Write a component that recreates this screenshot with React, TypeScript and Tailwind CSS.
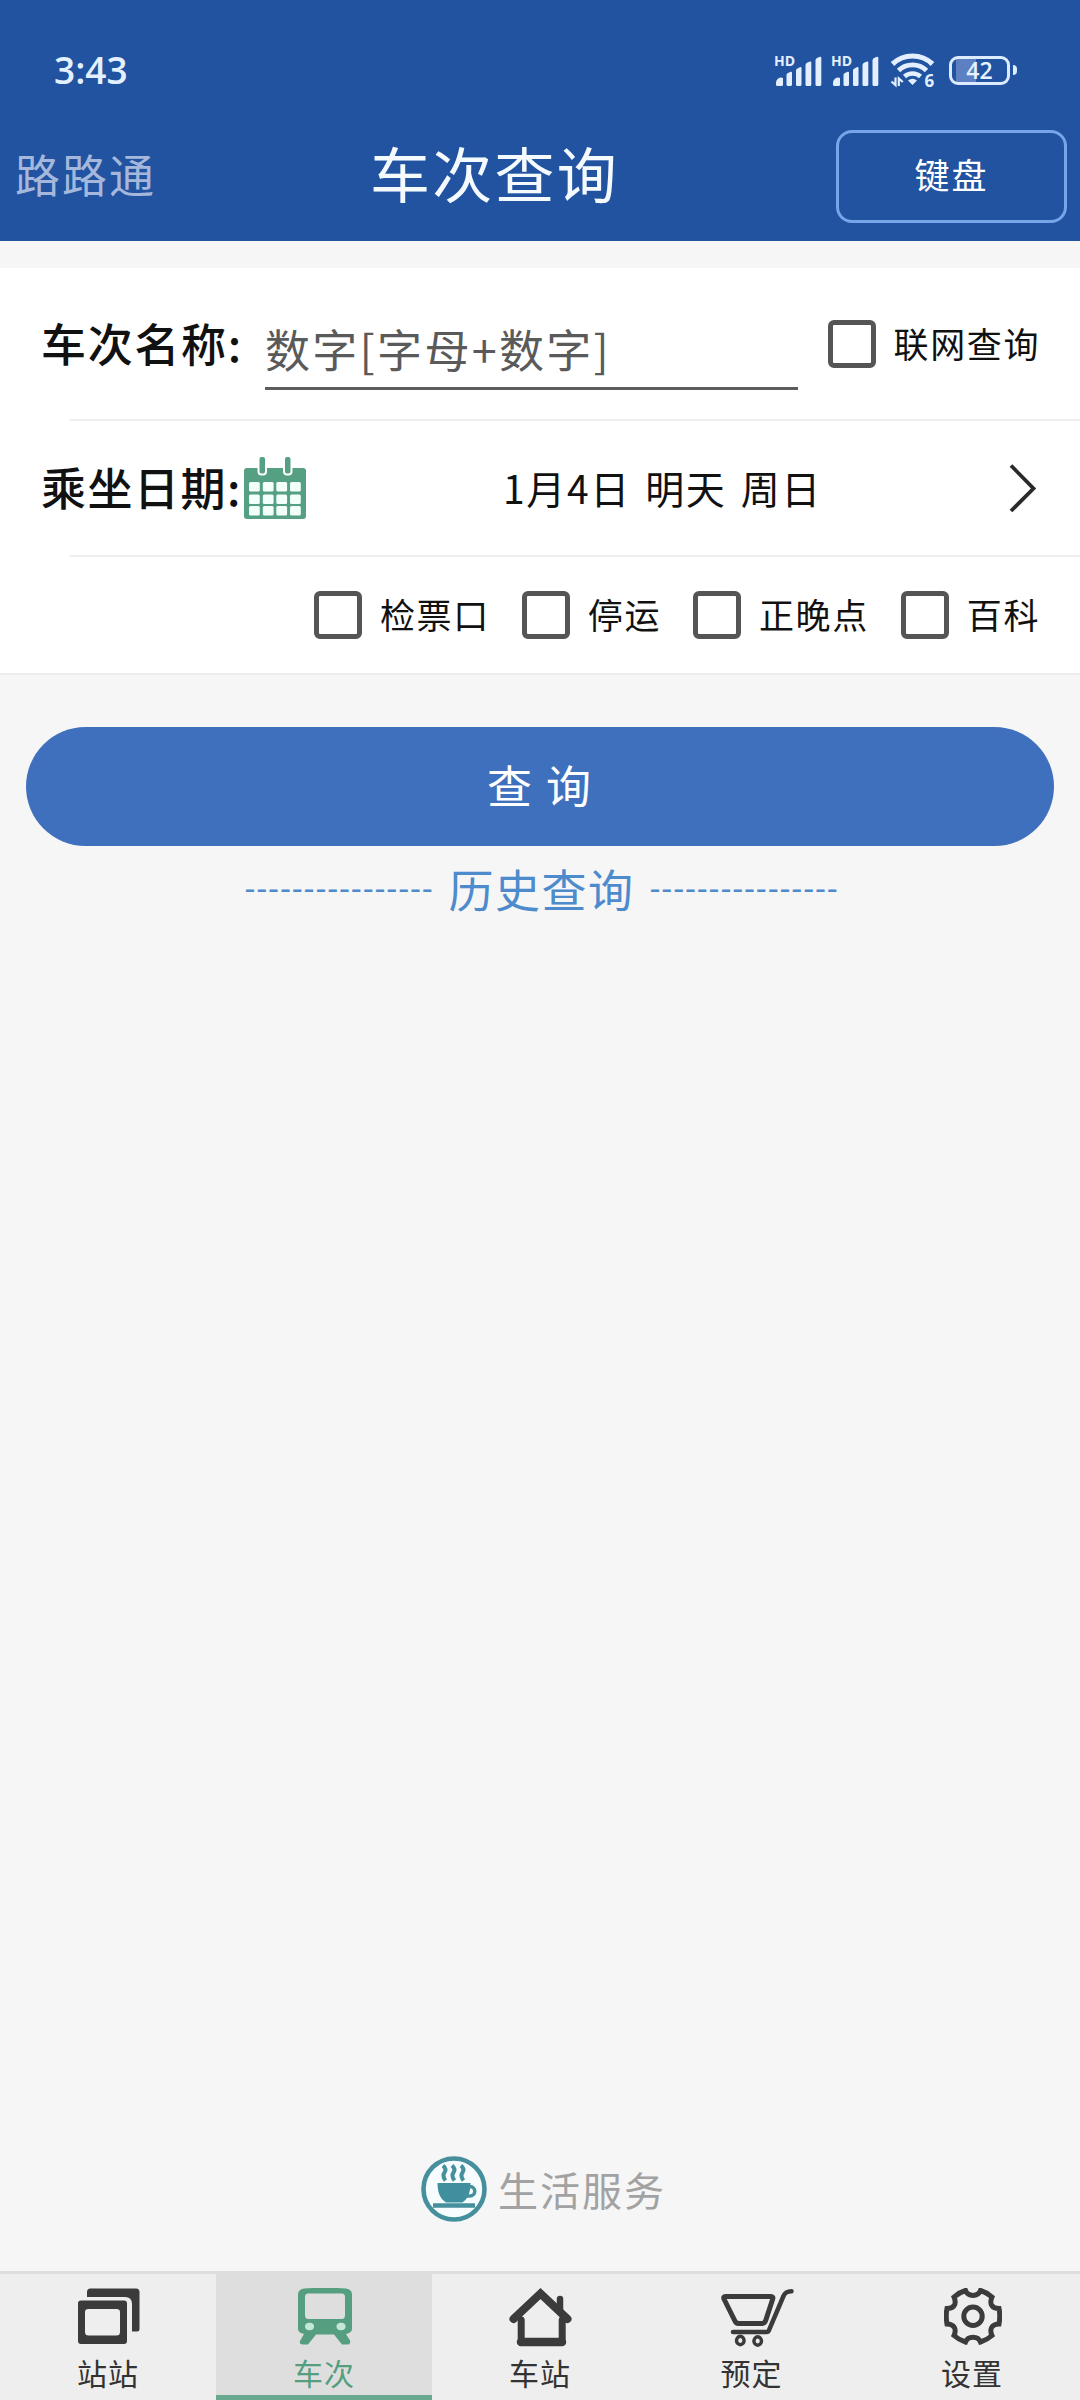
import React, { useState } from 'react';

type TabId = 'route' | 'train' | 'station' | 'booking' | 'settings';

const SignalIcon = () => (
  <svg viewBox="0 -4 50 38" className="-mt-1 h-[38px] w-[50px] shrink-0" fill="#e3efff">
    <text x="0" y="13" fontSize="14" fontWeight="700" fontFamily="'Open Sans', sans-serif">HD</text>
    <path d="M2 29.500a5 5 0 0 1 7-4.500v6.500a1.500 1.500 0 0 1-1.500 1.500H3.500A1.500 1.500 0 0 1 2 31.500z" />
    <path d="M12.500 22q0-1.500 1.500-2l2.500-1.200q1.500-.3 1.500 1v11.700q0 1.500-1.500 1.500H14q-1.500 0-1.500-1.500z" />
    <path d="M22 17.500q0-1.500 1.500-2l2.700-1.500q1.300-.3 1.300 1v16.500q0 1.500-1.500 1.500h-2.500q-1.500 0-1.500-1.500z" />
    <path d="M31.500 12q0-1.500 1.500-2.200l3-1.300q1.300-.3 1.300 1v22q0 1.500-1.500 1.500H33q-1.500 0-1.500-1.500z" />
    <path d="M41.500 7.500q0-1.700 1.500-2.500l3-1.200q1.300-.3 1.300 1.200v26.500q0 1.500-1.500 1.500H43q-1.500 0-1.500-1.500z" />
  </svg>
);

const WifiIcon = () => (
  <svg viewBox="0 0 48 44" className="-mb-1.5 h-11 w-12 shrink-0" fill="none" stroke="#e3efff">
    <path d="M2.500 13a29 29 0 0 1 40 0" strokeWidth="5.200" />
    <path d="M8.500 19.500a20 20 0 0 1 28 0" strokeWidth="4.800" />
    <path d="M14.500 25.500a12 12 0 0 1 16 0" strokeWidth="4.600" />
    <path d="M18 29.500q4.500-3.500 9 0l-4.500 4.500z" fill="#e3efff" stroke="none" />
    <path d="M1.500 30.500l4 3.500V26.500M8.800 35V27.500l4 3.500" strokeWidth="2.200" />
    <text x="34.500" y="35.500" fontSize="17" fontWeight="700" fontFamily="'Open Sans', sans-serif" fill="#e3efff" stroke="none">6</text>
  </svg>
);

const BatteryIcon = () => (
  <div className="flex items-center gap-[3px]">
    <div className="flex h-[29px] w-[61px] items-center justify-center rounded-[9px] border-[3px] border-[#dcebff] bg-[linear-gradient(90deg,transparent_4px,#5c80c2_4px,#5c80c2_24px,transparent_24px)] font-['Open_Sans',sans-serif] text-[23px] font-semibold leading-none text-[#e6f2ff]">
      42
    </div>
    <div className="h-[10px] w-[4px] rounded-r-sm bg-[#dcebff]" />
  </div>
);

const CalendarIcon = () => (
  <svg viewBox="0 0 62 62" className="h-[62px] w-[62px] shrink-0">
    <rect x="0" y="11" width="62" height="51" rx="3" fill="#559f82" />
    <g fill="#559f82" stroke="#fff" strokeWidth="2">
      <rect x="14.500" y="-1" width="7.500" height="18.500" rx="3" />
      <rect x="40" y="-1" width="7.500" height="18.500" rx="3" />
    </g>
    <g fill="#f2fffa">
      {[25, 37.5, 49].map((y) =>
        [5, 18.8, 32.3, 46].map((x) => <rect key={`${x}-${y}`} x={x} y={y} width="10.800" height="9.500" rx="1.500" />)
      )}
    </g>
  </svg>
);

const CoffeeIcon = () => (
  <svg viewBox="0 0 66 66" className="h-[66px] w-[66px] shrink-0" fill="none" stroke="#468f9c">
    <circle cx="33" cy="33" r="30.500" strokeWidth="4.600" fill="#f7fdfe" />
    <path d="M22 9.500q4 3.500 1.500 7t1 8M31 9.500q4 3.500 1.500 7t1 8M40 9.500q4 3.500 1.500 7t1 8" strokeWidth="4" />
    <path d="M16.500 27h33c0 10-3 16-8 19.500H25c-5.500-3.500-8.500-9.500-8.500-19.500z" fill="#3f8f9e" stroke="none" />
    <path d="M47 30.500h2a4.500 4.500 0 0 1 0 9.500H45" strokeWidth="3.500" />
    <path d="M12 49.500h42" strokeWidth="4.500" />
  </svg>
);

const RouteIcon = () => (
  <svg viewBox="0 0 62 58" className="h-[58px] w-[62px]" fill="#3b3b3b">
    <path d="M9 9V4q0-3.500 3.500-3.500H58q3.500 0 3.500 3.500v37q0 2.500-2.500 2.500h-5V16q0-7-7-7z" />
    <path fillRule="evenodd" d="M3 12.500h43q3 0 3 3V53q0 3-3 3H3q-3 0-3-3V15.500q0-3 3-3zM10.500 21Q7 21 7 24v20q0 3.500 3.500 3.500h28q3.500 0 3.500-3.500V24q0-3-3.500-3z" />
  </svg>
);

const TrainIcon = () => (
  <svg viewBox="0 0 54 58" className="h-[58px] w-[54px]" fill="#559f80">
    <path fillRule="evenodd" d="M6 .5Q27-1 48 .5q6 1 6 6V41q0 3.500-6 5l4 6.500q1 4-3 4h-5L36 46.500H18L10 56.500H5q-4 0-3-3.500l4-7q-6-1.500-6-5V6.500q0-5 6-6zM10 5.500Q7 5.500 7 9v18q0 4 3 4h34q3 0 3-4V9q0-3.500-3-3.500z" />
    <ellipse cx="11.500" cy="38.500" rx="4.500" ry="3.700" fill="#c4e8d8" />
    <ellipse cx="43" cy="38.500" rx="4.500" ry="3.700" fill="#c4e8d8" />
  </svg>
);

const StationIcon = () => (
  <svg viewBox="0 0 64 59" className="h-[59px] w-[64px]" fill="none" stroke="#3b3b3b" strokeLinejoin="round" strokeLinecap="round">
    <path d="M12.200 32v22h41V32" strokeWidth="7" />
    <path d="M12 54h41" strokeWidth="8.500" />
    <path d="M4.500 31L31.500 5.500 58.500 31" strokeWidth="8" strokeLinejoin="miter" />
    <path d="M51 11v11" strokeWidth="6.500" />
  </svg>
);

const CartIcon = () => (
  <svg viewBox="0 0 74 60" className="h-[60px] w-[74px]" fill="none" stroke="#3b3b3b" strokeLinejoin="round" strokeLinecap="round">
    <path d="M4.500 8.500h45.500q2.500 0 1.700 2.500l-7 21.500q-1 3-4 3H17.500q-2.500 0-3.800-3L3 11q-1-2.500 1.500-2.500z" strokeWidth="5" />
    <path d="M12 44h33.500q1.800 0 2.500-1.800L62.500 8q2-4.700 8-4.700" strokeWidth="4.500" />
    <ellipse cx="19.300" cy="52.500" rx="3.800" ry="4.200" strokeWidth="3.400" />
    <ellipse cx="36.700" cy="53" rx="3.800" ry="4.200" strokeWidth="3.400" />
  </svg>
);

const GearIcon = () => (
  <svg viewBox="0 0 58 58" className="h-[58px] w-[58px]" fill="none" stroke="#3b3b3b" strokeWidth="5">
    <path d="M21.500 2.500C24 9 34 9 36.500 2.500Q43 4.500 48 9C45 16 48 20.500 55 20.500Q56.500 28 55 36C48 36 45 41 48 47.500Q43 52 36.500 54C34 47.500 24 47.500 21.500 54Q15 52 10 47.500C13 41 10 36 3 36Q1.500 28 3 20.500C10 20.500 13 16 10 9Q15 4.500 21.500 2.500z" />
    <circle cx="29" cy="28.200" r="9.200" />
  </svg>
);

interface CheckFieldProps {
  label: string;
}

const CheckField: React.FC<CheckFieldProps> = ({ label }) => {
  const [checked, setChecked] = useState(false);

  return (
    <button onClick={() => setChecked(!checked)} className="flex shrink-0 items-center gap-[18px] whitespace-nowrap">
      <span className={`h-12 w-12 shrink-0 rounded-md border-[5px] border-[#555] ${checked ? 'bg-[#559f82]' : 'bg-white'}`} />
      <span className="-mr-[2px] pb-[3px] text-[35px] leading-none tracking-[1.6px] text-[#111]">{label}</span>
    </button>
  );
};

const tabs = [
  { id: 'route' as TabId, label: '站站', icon: RouteIcon },
  { id: 'train' as TabId, label: '车次', icon: TrainIcon },
  { id: 'station' as TabId, label: '车站', icon: StationIcon },
  { id: 'booking' as TabId, label: '预定', icon: CartIcon },
  { id: 'settings' as TabId, label: '设置', icon: GearIcon },
];

const options = ['检票口', '停运', '正晚点', '百科'];

export default function App() {
  const [currentTab, setCurrentTab] = useState<TabId>('train');

  return (
    <div className="flex h-[2400px] w-[1080px] flex-col overflow-hidden bg-[#f6f6f6] font-['Noto_Sans_CJK_SC',sans-serif]">
      {/* Header */}
      <header className="h-[241px] shrink-0 bg-[#2153a1]">
        <div className="flex h-[116px] items-center justify-between pl-[54px] pr-[63px] pt-[24px]">
          <span className="pb-[2px] font-['Open_Sans',sans-serif] text-[37px] font-semibold leading-none text-[#e3f0ff]">3:43</span>
          <div className="flex items-center">
            <SignalIcon />
            <div className="w-[7px]" />
            <SignalIcon />
            <div className="w-[9px]" />
            <WifiIcon />
            <div className="w-[11px]" />
            <BatteryIcon />
          </div>
        </div>
        <div className="flex h-[120px] items-center justify-between pl-[15px] pr-[13px]">
          <span className="pb-[5px] text-[45px] leading-none tracking-[2px] text-[#a5b8dc]">路路通</span>
          <h1 className="pb-[8px] pr-[3px] text-[60px] leading-none tracking-[2.300px] text-[#f5faff]">车次查询</h1>
          <button className="flex h-[93px] w-[231px] items-center justify-center rounded-2xl border-[3px] border-[#78a4ea] pb-[5px] text-[35px] leading-none tracking-[2px] text-white">
            键盘
          </button>
        </div>
      </header>

      {/* Query form */}
      <section className="mt-[27px] shrink-0 bg-white">
        <div className="flex h-[151px] items-center pl-[41px] pr-[42px]">
          <span className="w-[224px] shrink-0 whitespace-nowrap pb-[3px] text-[45px] font-medium leading-none tracking-[1.700px] text-[#111]">车次名称:</span>
          <div className="mt-[15px] flex h-[77px] w-[533px] items-center border-b-[3px] border-[#5c5c5c] pb-[2px]">
            <span className="whitespace-nowrap text-[45px] leading-none tracking-[2.300px] text-[#5a5a5a]">数字[字母+数字]</span>
          </div>
          <div className="ml-auto">
            <CheckField label="联网查询" />
          </div>
        </div>
        <div className="ml-[70px] h-[2px] bg-[#efefef]" />
        <div className="flex h-[134px] items-center pl-[41px] pr-[43px]">
          <span className="w-[203px] shrink-0 whitespace-nowrap pb-[3px] text-[45px] font-medium leading-none tracking-[1.500px] text-[#111]">乘坐日期:</span>
          <CalendarIcon />
          <span className="flex-1 pb-[2px] pl-[10px] text-center text-[39px] leading-none tracking-[1.600px] text-[#111] [word-spacing:4px]">1月4日 明天 周日</span>
          <svg viewBox="0 0 28 50" className="h-[50px] w-7" fill="none" stroke="#2a2a2a" strokeWidth="3.800">
            <path d="M2 2.500L24.500 25.500 2 48" />
          </svg>
        </div>
        <div className="ml-[70px] h-[2px] bg-[#efefef]" />
        <div className="flex h-[118px] items-center justify-end gap-[34px] border-b-2 border-[#ececec] pr-[42px]">
          {options.map((option) => (
            <CheckField key={option} label={option} />
          ))}
        </div>
      </section>

      <main className="flex flex-1 flex-col items-center">
        <button className="mt-[52px] flex h-[119px] w-[1028px] items-center justify-center rounded-full bg-[#3f70bd] pb-[4px] text-[45px] leading-none tracking-[2px] text-white">
          查 询
        </button>
        <div className="mt-[20px] flex items-center justify-center whitespace-nowrap leading-none text-[#4d8bcd]">
          <span className="w-[186px] font-['Liberation_Sans',sans-serif] text-[33px] leading-none tracking-[0.83px]">----------------</span>
          <h2 className="pl-[18px] pr-[15px] text-[45px] leading-none tracking-[1.500px]">历史查询</h2>
          <span className="w-[186px] font-['Liberation_Sans',sans-serif] text-[33px] leading-none tracking-[0.83px]">----------------</span>
        </div>
        <div className="mb-[49px] mt-auto flex items-center gap-[11px] pl-[7px]">
          <CoffeeIcon />
          <span className="text-[40px] leading-none tracking-[2px] text-[#a2a2a2]">生活服务</span>
        </div>
      </main>

      {/* Bottom navigation */}
      <nav className="grid h-[129px] shrink-0 grid-cols-5 border-t-[3px] border-[#dedede] bg-[#eee]">
        {tabs.map((tab) => {
          const Icon = tab.icon;
          const isActive = currentTab === tab.id;
          return (
            <button
              key={tab.id}
              onClick={() => setCurrentTab(tab.id)}
              className={`flex flex-col items-center border-b-[5px] pt-[14px] text-[30px] tracking-[1px] ${
                isActive ? 'border-[#68a88e] bg-[#dedede] text-[#559f80]' : 'border-transparent text-[#333]'
              }`}
            >
              <div className={`flex h-[60px] items-start ${tab.id === 'booking' ? 'pl-[3px]' : 'pl-[2px]'}`}>
                <Icon />
              </div>
              <span className={`mt-[9px] leading-none ${tab.id === 'booking' ? 'pr-[9px]' : ''}`}>{tab.label}</span>
            </button>
          );
        })}
      </nav>
    </div>
  );
}
